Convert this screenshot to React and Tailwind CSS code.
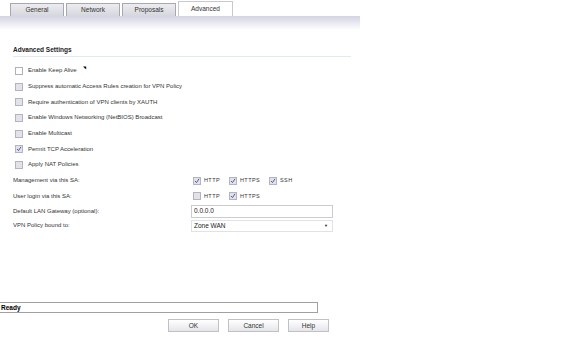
import React from 'react';

const font = { fontFamily: '"Liberation Sans", Arial, sans-serif' };

function Box({ checked, white }) {
    return (
        <span
            className={
                white
                    ? 'inline-flex w-[8px] h-[8px] border border-[#b0b0bc] bg-white items-center justify-center shrink-0'
                    : 'inline-flex w-[8px] h-[8px] border border-[#b4b4c0] bg-[#e2e2e8] items-center justify-center shrink-0'
            }
        >
            {checked && (
                <svg width="6" height="6" viewBox="0 0 6 6">
                    <path d="M1 3 L2.5 4.6 L5 0.8" stroke="#4a5fa8" strokeWidth="1" fill="none" />
                </svg>
            )}
        </span>
    );
}

function Check({ label, checked, white, extra }) {
    return (
        <div className="flex items-center h-[15.7px] pl-[15px]">
            <Box checked={checked} white={white} />
            <span className="ml-[5px] text-[6px] text-[#333]">{label}</span>
            {extra}
        </div>
    );
}

function Tab({ label, active }) {
    return (
        <div
            className={
                active
                    ? 'w-[55px] h-[15px] bg-white border border-b-0 border-[#c8c8d4] text-[6.5px] text-[#333] flex items-center justify-center'
                    : 'w-[54px] h-[13px] mt-[2px] bg-gradient-to-b from-[#ececf0] to-[#d6d6de] border border-b-0 border-[#a8a8b4] text-[6.5px] text-[#333] flex items-center justify-center'
            }
        >
            {label}
        </div>
    );
}

export default function App() {
    const checks = [
        ['Enable Keep Alive', false],
        ['Suppress automatic Access Rules creation for VPN Policy', false],
        ['Require authentication of VPN clients by XAUTH', false],
        ['Enable Windows Networking (NetBIOS) Broadcast', false],
        ['Enable Multicast', false],
        ['Permit TCP Acceleration', true],
        ['Apply NAT Policies', false],
    ];

    return (
        <div className="w-[585px] h-[346px] bg-white relative overflow-hidden" style={font}>
            <div className="w-[360px]">
                <div className="flex gap-[2px] pl-[10px] pt-[1px]">
                    <Tab label="General" />
                    <Tab label="Network" />
                    <Tab label="Proposals" />
                    <Tab label="Advanced" active />
                </div>
                <div className="h-[14px] bg-gradient-to-b from-[#d3d3e4] to-white" />

                <div className="pt-[16px] pl-[13px] pr-[9px]">
                    <div className="text-[6.5px] font-bold text-[#222] leading-[8px]">Advanced Settings</div>
                    <div className="h-[1px] bg-[#dfeaee] mt-[2px]" />
                </div>

                <div className="mt-[6px]">
                    {checks.map(([l, c], i) => (
                        <Check
                            key={i}
                            label={l}
                            checked={c}
                            white={i === 0}
                            extra={i === 0 ? <span className="ml-[6px] -mt-[5px] text-[4px] text-black">◥</span> : null}
                        />
                    ))}
                </div>

                <div className="pl-[13px] text-[6px] text-[#333]">
                    <div className="flex items-center h-[15.5px]">
                        <span className="w-[180px]">Management via this SA:</span>
                        <Box checked />
                        <span className="ml-[3px] w-[25px] tracking-[0.4px] text-[5.5px]">HTTP</span>
                        <Box checked />
                        <span className="ml-[3px] w-[29px] tracking-[0.4px] text-[5.5px]">HTTPS</span>
                        <Box checked />
                        <span className="ml-[3px] tracking-[0.4px] text-[5.5px]">SSH</span>
                    </div>
                    <div className="flex items-center h-[15.5px]">
                        <span className="w-[180px]">User login via this SA:</span>
                        <Box />
                        <span className="ml-[3px] w-[25px] tracking-[0.4px] text-[5.5px]">HTTP</span>
                        <Box checked />
                        <span className="ml-[3px] tracking-[0.4px] text-[5.5px]">HTTPS</span>
                    </div>
                    <div className="flex items-center h-[15px]">
                        <span className="w-[178px]">Default LAN Gateway (optional):</span>
                        <div className="w-[142px] h-[13px] border border-[#c8ccd4] flex items-center px-[2px] text-[6.5px] text-[#222]">0.0.0.0</div>
                    </div>
                    <div className="flex items-center h-[14px]">
                        <span className="w-[178px]">VPN Policy bound to:</span>
                        <div className="w-[142px] h-[12px] border border-[#e0e2e6] flex items-center justify-between px-[2px] text-[6.5px] text-[#222]">
                            <span>Zone WAN</span>
                            <span className="text-[4px] pr-[2px]">▼</span>
                        </div>
                    </div>
                </div>
            </div>

            <div className="absolute left-0 top-[302px] w-[318px] h-[11px] border border-[#a0a0a0] border-l-0 flex items-center">
                <span className="text-[6.5px] font-bold text-black pl-[1px]">Ready</span>
            </div>

            <div className="absolute top-[319px] left-[168px] flex gap-[9px] text-[6.5px] text-[#333]">
                <div className="w-[51px] h-[13px] border border-[#c0c0c8] bg-gradient-to-b from-white to-[#e6e6ea] flex items-center justify-center">OK</div>
                <div className="w-[51px] h-[13px] border border-[#c0c0c8] bg-gradient-to-b from-white to-[#e6e6ea] flex items-center justify-center">Cancel</div>
                <div className="w-[41px] h-[13px] border border-[#c0c0c8] bg-gradient-to-b from-white to-[#e6e6ea] flex items-center justify-center">Help</div>
            </div>
        </div>
    );
}
